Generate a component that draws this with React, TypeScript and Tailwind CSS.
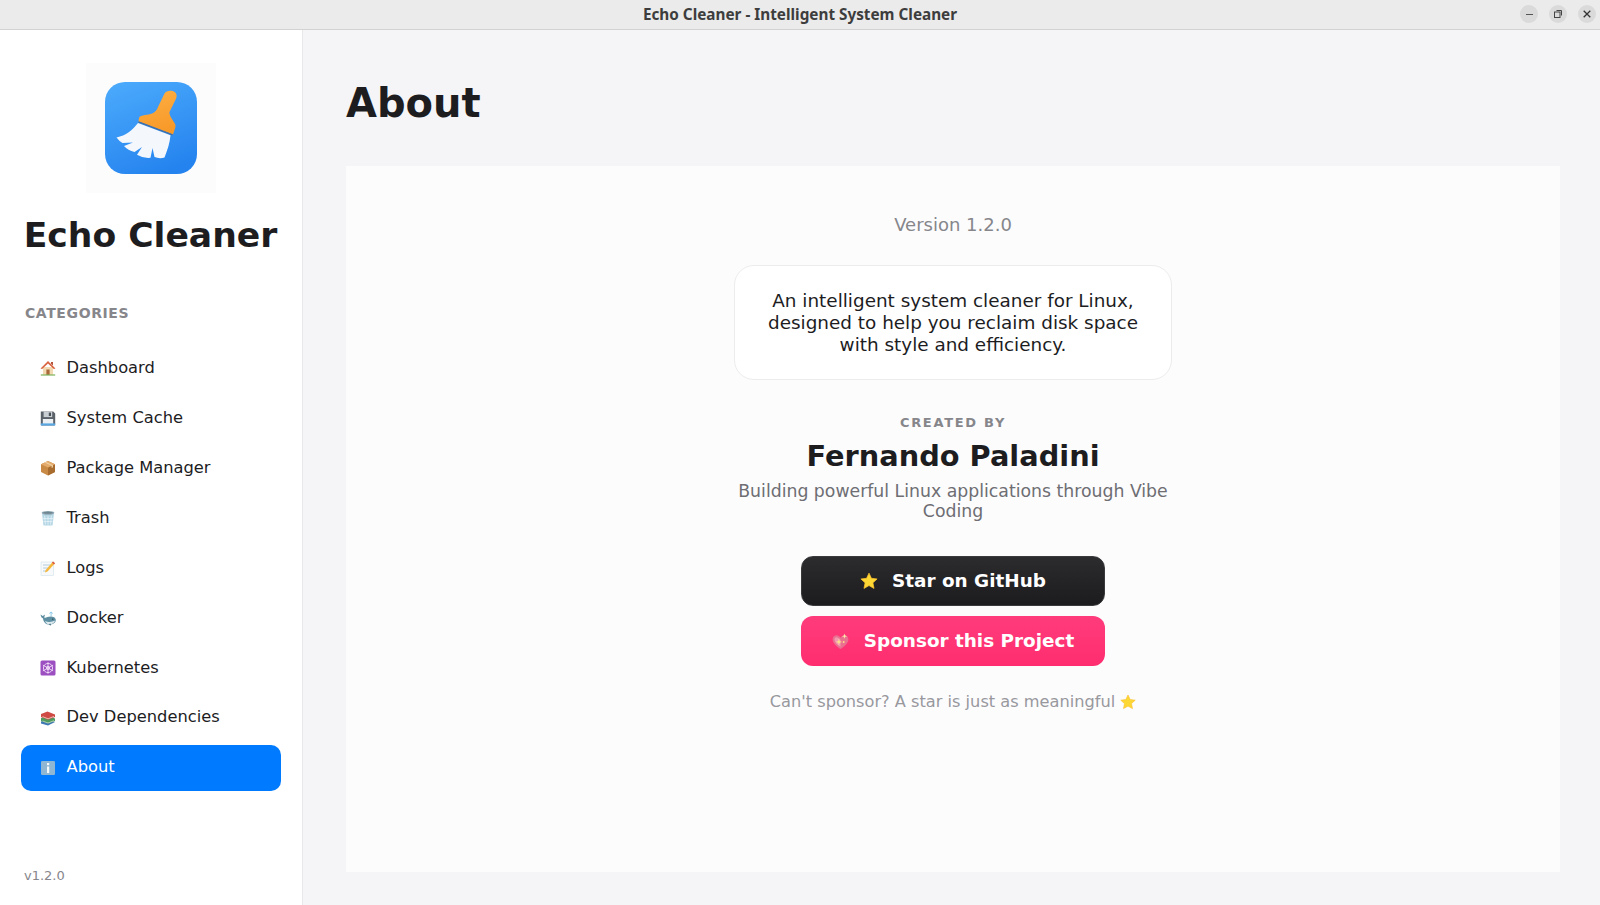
import { ReactNode } from "react";

// small hand drawn versions of the colour emoji used in the app
function HouseIcon() {
  return (
    <svg viewBox="0 0 16 16" className="w-4 h-4">
      <rect x="3" y="7" width="10" height="8" fill="#f3d9b1" />
      <path d="M8 1 L15.5 8.5 L13.8 9 L8 3.6 L2.2 9 L0.5 8.5 Z" fill="#d9623f" />
      <path d="M11 2 h2 v3.5 l-2 -1.8 Z" fill="#b5533a" />
      <rect x="6.4" y="9.5" width="3.2" height="5.5" fill="#a8693c" />
      <rect x="0.8" y="14.4" width="14.4" height="1.2" fill="#7cb35b" />
    </svg>
  );
}

function FloppyIcon() {
  return (
    <svg viewBox="0 0 16 16" className="w-4 h-4">
      <path d="M0.8 1.5 h12.4 l2 2 v11 a1 1 0 0 1 -1 1 h-12.4 a1 1 0 0 1 -1 -1 Z" fill="#5b6168" />
      <rect x="3.6" y="1.5" width="8.6" height="5.6" fill="#c9ced2" />
      <rect x="8.8" y="2.6" width="2.2" height="3.4" fill="#4a5058" />
      <rect x="2.8" y="9" width="10.4" height="6" fill="#eef1f3" />
      <rect x="0.8" y="13.4" width="14.4" height="2.1" fill="#58a8e6" />
    </svg>
  );
}

function PackageIcon() {
  return (
    <svg viewBox="0 0 16 16" className="w-4 h-4">
      <path d="M8 1 L15 4.2 V12 L8 15.5 L1 12 V4.2 Z" fill="#c98a45" />
      <path d="M8 7.5 L15 4.2 V12 L8 15.5 Z" fill="#a96c2f" />
      <path d="M8 1 L15 4.2 L8 7.5 L1 4.2 Z" fill="#e3ab6c" />
      <path d="M4.6 2.6 L11.6 5.8 V8 L13 7.3 V5.2 L6 2 Z" fill="#f0d2a4" />
    </svg>
  );
}

function TrashIcon() {
  return (
    <svg viewBox="0 0 16 16" className="w-4 h-4">
      <path d="M2 3.2 H14 L12.6 15 a0.8 0.8 0 0 1 -0.8 0.6 H4.2 a0.8 0.8 0 0 1 -0.8 -0.6 Z" fill="#b4d6e4" />
      <ellipse cx="8" cy="2.8" rx="6.4" ry="1.9" fill="#92a9b5" />
      <ellipse cx="8" cy="2.8" rx="4.8" ry="1" fill="#6f8692" />
      <path d="M4.6 5.6 L5.4 14.6 M8 5.8 V14.8 M11.4 5.6 L10.6 14.6 M3 8.6 H13 M3.4 11.6 H12.6" stroke="#e6f2f7" strokeWidth="0.8" />
    </svg>
  );
}

function MemoIcon() {
  return (
    <svg viewBox="0 0 16 16" className="w-4 h-4">
      <rect x="1" y="2" width="12.5" height="13.5" fill="#f7f9fa" stroke="#cfe0ec" strokeWidth="0.6" />
      <path d="M3 5 h8 M3 8 h6 M3 11 h4" stroke="#a9c6dc" strokeWidth="0.9" />
      <path d="M13 1.5 L15 3.3 L7.5 11.5 L5 12.5 L5.7 10 Z" fill="#f5b83d" />
      <path d="M13 1.5 L15 3.3 L14 4.4 L12 2.6 Z" fill="#d9534f" />
    </svg>
  );
}

function WhaleIcon() {
  return (
    <svg viewBox="0 0 16 16" className="w-4 h-4">
      <path d="M0.4 4.5 L2.8 6 L5 4.6 L4.2 7.4 C5 8.2 6 7.8 7.5 7 C10 5.8 15.8 6.2 15.8 10 C15.8 12.8 12.8 14.6 9.4 14.6 C6 14.6 3.4 12 3 8.4 L1.4 7.2 Z" fill="#5d8ea1" />
      <path d="M5 11 C8 12.4 12 12.2 15.2 10.6 C14.4 13 11.8 14.6 9.4 14.6 C7.4 14.6 5.9 13 5 11 Z" fill="#dbe8ed" />
      <path d="M8.6 14 L10.4 15.8 L11 13.8" fill="#47707f" />
      <path d="M9.6 3.6 C10 1.8 12.2 1.8 12.6 3.6 M11.1 6 V2.4" stroke="#7cc4e4" strokeWidth="0.9" fill="none" />
      <circle cx="12.8" cy="9.2" r="0.6" fill="#1f3640" />
    </svg>
  );
}

function KubeIcon() {
  return (
    <svg viewBox="0 0 16 16" className="w-4 h-4">
      <rect x="0.5" y="0.5" width="15" height="15" rx="1.5" fill="#9b4fc0" />
      <g fill="none" stroke="#f0dcf7" strokeWidth="0.9">
        <circle cx="8" cy="8" r="4.6" />
        <circle cx="8" cy="8" r="1.6" />
        <path d="M8 2.2 V13.8 M2.9 5.1 L13.1 10.9 M2.9 10.9 L13.1 5.1" />
      </g>
    </svg>
  );
}

function BooksIcon() {
  return (
    <svg viewBox="0 0 16 16" className="w-4 h-4">
      <path d="M1 11.5 L8.5 9.5 L15 12 L8 15.5 L1 13.5 Z" fill="#3f78b5" />
      <path d="M1 8 L8 5.8 L15 8.5 V11 L8 13.6 L1 11 Z" fill="#4f9a5d" />
      <path d="M2.5 11 L8 13 L14 10.7" stroke="#eef1e6" strokeWidth="0.6" fill="none" />
      <path d="M1 4 L7.5 1.5 L15 4.5 V7 L8 9.8 L1 7 Z" fill="#cf4a45" />
      <path d="M2.5 6.6 L8 8.8 L14 6.4" stroke="#f3e7dc" strokeWidth="0.7" fill="none" />
    </svg>
  );
}

function InfoIcon() {
  return (
    <svg viewBox="0 0 16 16" className="w-4 h-4">
      <rect x="1" y="1" width="14" height="14" rx="1.2" fill="#8fb7d3" />
      <rect x="7" y="3" width="2.2" height="2.2" fill="#f5f9fb" />
      <rect x="7" y="6.5" width="2.2" height="6.5" fill="#f5f9fb" />
    </svg>
  );
}

function StarIcon({ className }: { className: string }) {
  return (
    <svg viewBox="0 0 24 24" className={className}>
      <path
        d="M12 1.5 L15.2 8.4 L22.8 9.3 L17.2 14.4 L18.7 21.9 L12 18.1 L5.3 21.9 L6.8 14.4 L1.2 9.3 L8.8 8.4 Z"
        fill="#fdd835"
        stroke="#fbc02d"
        strokeLinejoin="round"
      />
    </svg>
  );
}

function HeartIcon() {
  return (
    <svg viewBox="0 0 16 16" className="w-[17px] h-[17px]">
      <path d="M8 15 C3 11.5 0.6 9 0.6 5.8 C0.6 3.4 2.4 2 4.2 2 C5.8 2 7.2 2.9 8 4.4 C8.8 2.9 10.2 2 11.8 2 C13.6 2 15.4 3.4 15.4 5.8 C15.4 9 13 11.5 8 15 Z" fill="#e9708f" />
      <path d="M4 4 C5.5 4 7 5 8 6.6 L8 13 C5 10.8 2.4 8.6 2.4 6 C2.4 5 3 4.2 4 4 Z" fill="#f39ab3" />
      <path d="M6.5 5.5 L7.2 7.6 L9.4 8.4 L7.2 9.2 L6.5 11.4 L5.8 9.2 L3.6 8.4 L5.8 7.6 Z" fill="#fbe08a" />
      <path d="M11.8 0.5 L12.4 2.4 L14.3 3 L12.4 3.6 L11.8 5.5 L11.2 3.6 L9.3 3 L11.2 2.4 Z" fill="#fde9a8" />
      <circle cx="11" cy="8.5" r="0.9" fill="#fbe08a" />
    </svg>
  );
}

function BroomLogo() {
  return (
    <svg viewBox="0 0 92 92" className="w-[92px] h-[92px]">
      <defs>
        <linearGradient id="logoBg" x1="0.2" y1="0" x2="0.6" y2="1">
          <stop offset="0" stopColor="#4aa9fb" />
          <stop offset="1" stopColor="#2583ef" />
        </linearGradient>
        <linearGradient id="logoHandle" x1="0" y1="0" x2="0.3" y2="1">
          <stop offset="0" stopColor="#fdb045" />
          <stop offset="1" stopColor="#f89a2a" />
        </linearGradient>
      </defs>
      <rect width="92" height="92" rx="20" fill="url(#logoBg)" />
      <path
        d="M59.5 11.5 C61.5 8 67 8 69.8 10 C72 12 72 14.5 71 16.8 L64.5 30 C64 33 67 37 69.5 41 C71 43 70.5 45 70 46.5 L68 52.5 L33.5 39.5 L34 36 C34.5 34 37 33.5 40 33 C45 32.5 50 31 51.8 27.5 Z"
        fill="url(#logoHandle)"
      />
      <path d="M33.5 40 L67.5 52.8" stroke="#3f6ea8" strokeWidth="1.4" />
      <path
        d="M33 41 L65.5 53.2 C65 60 62.5 68 59.5 75.5 Q54.5 77 49.5 75 L47.5 66 L45.5 75.8 Q38 76.5 32 72.8 L37 65 L29.5 70 Q23 68.5 19 64 L28 60.5 L17.5 61 Q14 59 11.5 55.5 C21 53.5 27.5 48 33 41 Z"
        fill="#f4f8fc"
      />
    </svg>
  );
}

const navItems: { label: string; icon: ReactNode; active?: boolean }[] = [
  { label: "Dashboard", icon: <HouseIcon /> },
  { label: "System Cache", icon: <FloppyIcon /> },
  { label: "Package Manager", icon: <PackageIcon /> },
  { label: "Trash", icon: <TrashIcon /> },
  { label: "Logs", icon: <MemoIcon /> },
  { label: "Docker", icon: <WhaleIcon /> },
  { label: "Kubernetes", icon: <KubeIcon /> },
  { label: "Dev Dependencies", icon: <BooksIcon /> },
  { label: "About", icon: <InfoIcon />, active: true },
];

export default function App() {
  return (
    <div className="h-screen flex flex-col overflow-hidden bg-[#f5f5f7] font-['DejaVu_Sans',sans-serif] text-[#1d1d1f]">
      {/* window title bar */}
      <header className="h-[30px] shrink-0 relative flex items-center justify-center bg-[#ebebeb] border-b border-[#d2d2d2]">
        <span className="font-['Noto_Sans',sans-serif] font-bold text-[15.3px] text-[#3d3d3d]">
          Echo Cleaner - Intelligent System Cleaner
        </span>
        <div className="absolute right-[4px] top-[5px] flex gap-[11px]">
          <button className="w-[18px] h-[18px] rounded-full bg-[#dadada] flex items-center justify-center">
            <span className="w-[7px] h-px bg-[#555]" />
          </button>
          <button className="w-[18px] h-[18px] rounded-full bg-[#dadada] flex items-center justify-center">
            <svg viewBox="0 0 8 8" className="w-2 h-2" fill="none" stroke="#444" strokeWidth="1">
              <rect x="0.5" y="2" width="5.5" height="5.5" />
              <path d="M2.5 0.5 H7.5 V5.5" />
            </svg>
          </button>
          <button className="w-[18px] h-[18px] rounded-full bg-[#dadada] flex items-center justify-center">
            <svg viewBox="0 0 8 8" className="w-2 h-2" fill="none" stroke="#333" strokeWidth="1.3">
              <path d="M0.7 0.7 L7.3 7.3 M7.3 0.7 L0.7 7.3" />
            </svg>
          </button>
        </div>
      </header>

      <div className="flex-1 flex min-h-0">
        {/* LEFT: sidebar */}
        <aside className="w-[303px] shrink-0 bg-white border-r border-[#e8e8ea] flex flex-col pt-[33px] pb-[21px]">
          <div className="w-[130px] h-[130px] ml-[86px] bg-[#fcfcfc] flex items-center justify-center">
            <BroomLogo />
          </div>
          <h2 className="mt-[21px] text-center font-bold text-[34.6px] leading-[42px] text-[#1d1d1f] pr-px">
            Echo Cleaner
          </h2>
          <div className="mt-[49px] ml-[25px] text-[14px] leading-[17px] font-bold text-[#86868b] tracking-[0.6px]">
            CATEGORIES
          </div>
          <nav className="mt-[23.5px] mx-[21px] flex flex-col gap-1">
            {navItems.map((item) => (
              <div
                key={item.label}
                className={
                  item.active
                    ? "h-[45.9px] rounded-[10px] bg-[#007aff] text-white flex items-center pl-[19px] gap-[10.5px] text-[16.3px]"
                    : "h-[45.9px] rounded-[10px] text-[#1d1d1f] flex items-center pl-[19px] gap-[10.5px] text-[16.3px]"
                }
              >
                {item.icon}
                <span>{item.label}</span>
              </div>
            ))}
          </nav>
          <div className="mt-auto ml-[24px] text-[13px] leading-[16px] text-[#86868b]">v1.2.0</div>
        </aside>

        {/* RIGHT: about page */}
        <main className="flex-1 min-w-0 pl-[43px] pr-[40px] pb-[33px] flex flex-col">
          <h1 className="mt-[49px] font-bold text-[40px] leading-[48px] text-[#1d1d1f]">About</h1>
          <section className="mt-[39px] flex-1 bg-[#fcfcfd] flex flex-col items-center pt-[47px]">
            <p className="text-[18px] leading-[24px] text-[#86868b]">Version 1.2.0</p>
            <div className="mt-[28px] w-[438px] h-[115px] rounded-[20px] bg-white border border-[#ececee] flex items-center justify-center text-center text-[18.4px] leading-[22px] text-[#1d1d1f] px-[24px]">
              An intelligent system cleaner for Linux, designed to help you reclaim disk space with style and efficiency.
            </div>
            <p className="mt-[35px] text-[13px] leading-[16px] font-bold tracking-[1.7px] text-[#86868b]">CREATED BY</p>
            <h3 className="mt-[7px] font-bold text-[28.8px] leading-[36px] text-[#1d1d1f]">Fernando Paladini</h3>
            <p className="mt-[7px] w-[438px] text-center text-[17.3px] leading-[20px] text-[#6e6e73]">
              Building powerful Linux applications through Vibe Coding
            </p>
            <button className="mt-[35px] w-[304px] h-[50px] rounded-[12px] bg-gradient-to-b from-[#2c2c2e] to-[#1c1c1e] border border-[#3a3a3c] text-white font-bold text-[18.4px] flex items-center justify-center gap-[14px]">
              <StarIcon className="w-[18px] h-[18px]" />
              <span>Star on GitHub</span>
            </button>
            <button className="mt-[10px] w-[304px] h-[50px] rounded-[12px] bg-gradient-to-b from-[#ff3b7c] to-[#ff2d6f] text-white font-bold text-[18.4px] flex items-center justify-center gap-[15px]">
              <HeartIcon />
              <span>Sponsor this Project</span>
            </button>
            <p className="mt-[26px] flex items-center gap-[5px] text-[16.2px] leading-[20px] text-[#98989d]">
              Can't sponsor? A star is just as meaningful
              <StarIcon className="w-4 h-4" />
            </p>
          </section>
        </main>
      </div>
    </div>
  );
}
